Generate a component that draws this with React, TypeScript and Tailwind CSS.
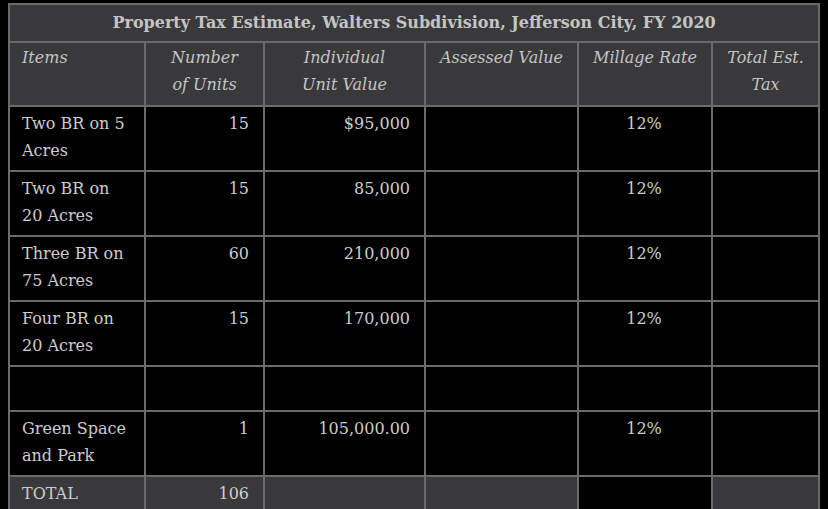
import React from 'react';

type Row = {
  item: string[];
  units: string;
  value: string;
  rate: string;
  h: string;
};

const rows: Row[] = [
  { item: ['Two BR on 5', 'Acres'], units: '15', value: '$95,000', rate: '12%', h: 'h-[65px]' },
  { item: ['Two BR on', '20 Acres'], units: '15', value: '85,000', rate: '12%', h: 'h-[65px]' },
  { item: ['Three BR on', '75 Acres'], units: '60', value: '210,000', rate: '12%', h: 'h-[65px]' },
  { item: ['Four BR on', '20 Acres'], units: '15', value: '170,000', rate: '12%', h: 'h-[65px]' },
  { item: [], units: '', value: '', rate: '', h: 'h-[45px]' },
  { item: ['Green Space', 'and Park'], units: '1', value: '105,000.00', rate: '12%', h: 'h-[65px]' },
];

const head = 'border-2 border-[#6b6b6b] align-top px-3 pt-[1px] pb-0 font-normal';
const cell = 'border-2 border-[#6b6b6b] align-top pl-3 pr-[14px] pt-[3px] pb-0';

function App() {
  return (
    <div className="min-h-[509px] bg-black pl-2 pt-[3px] pr-[10px] font-['DejaVu_Serif',serif] text-[16px] leading-[27px] text-[#cdcdcd]">
      <table className="w-[810px] table-fixed border-collapse">
        <colgroup>
          <col className="w-[136px]" />
          <col className="w-[119px]" />
          <col className="w-[161px]" />
          <col className="w-[153px]" />
          <col className="w-[134px]" />
          <col className="w-[107px]" />
        </colgroup>
        <thead>
          <tr className="h-[38px] bg-[#39393b]">
            <th colSpan={6} className="border-2 border-[#6b6b6b] pb-[2px] text-center align-middle font-bold text-[#c4c4c4]">
              Property Tax Estimate, Walters Subdivision, Jefferson City, FY 2020
            </th>
          </tr>
          <tr className="h-[64px] bg-[#39393b] italic text-[#c4c4c4]">
            <th className={`${head} text-left`}>Items</th>
            <th className={`${head} text-center`}>
              Number
              <br />
              of Units
            </th>
            <th className={`${head} text-center`}>
              Individual
              <br />
              Unit Value
            </th>
            <th className={`${head} text-center`}>Assessed Value</th>
            <th className={`${head} text-center`}>Millage Rate</th>
            <th className={`${head} text-center`}>
              Total Est.
              <br />
              Tax
            </th>
          </tr>
        </thead>
        <tbody>
          {rows.map((r, i) => (
            <tr key={i} className={r.h}>
              <td className={`${cell} text-left`}>
                {r.item.map((l, j) => (
                  <div key={j}>{l}</div>
                ))}
              </td>
              <td className={`${cell} text-right`}>{r.units}</td>
              <td className={`${cell} text-right`}>{r.value}</td>
              <td className={cell}></td>
              <td className={`${cell} text-center`}>{r.rate}</td>
              <td className={cell}></td>
            </tr>
          ))}
          <tr className="h-[40px]">
            <td className={`${cell} bg-[#39393b] text-left`}>TOTAL</td>
            <td className={`${cell} bg-[#39393b] text-right`}>106</td>
            <td className={`${cell} bg-[#39393b]`}></td>
            <td className={`${cell} bg-[#39393b]`}></td>
            <td className={cell}></td>
            <td className={`${cell} bg-[#39393b]`}></td>
          </tr>
        </tbody>
      </table>
    </div>
  );
}

export default App;
